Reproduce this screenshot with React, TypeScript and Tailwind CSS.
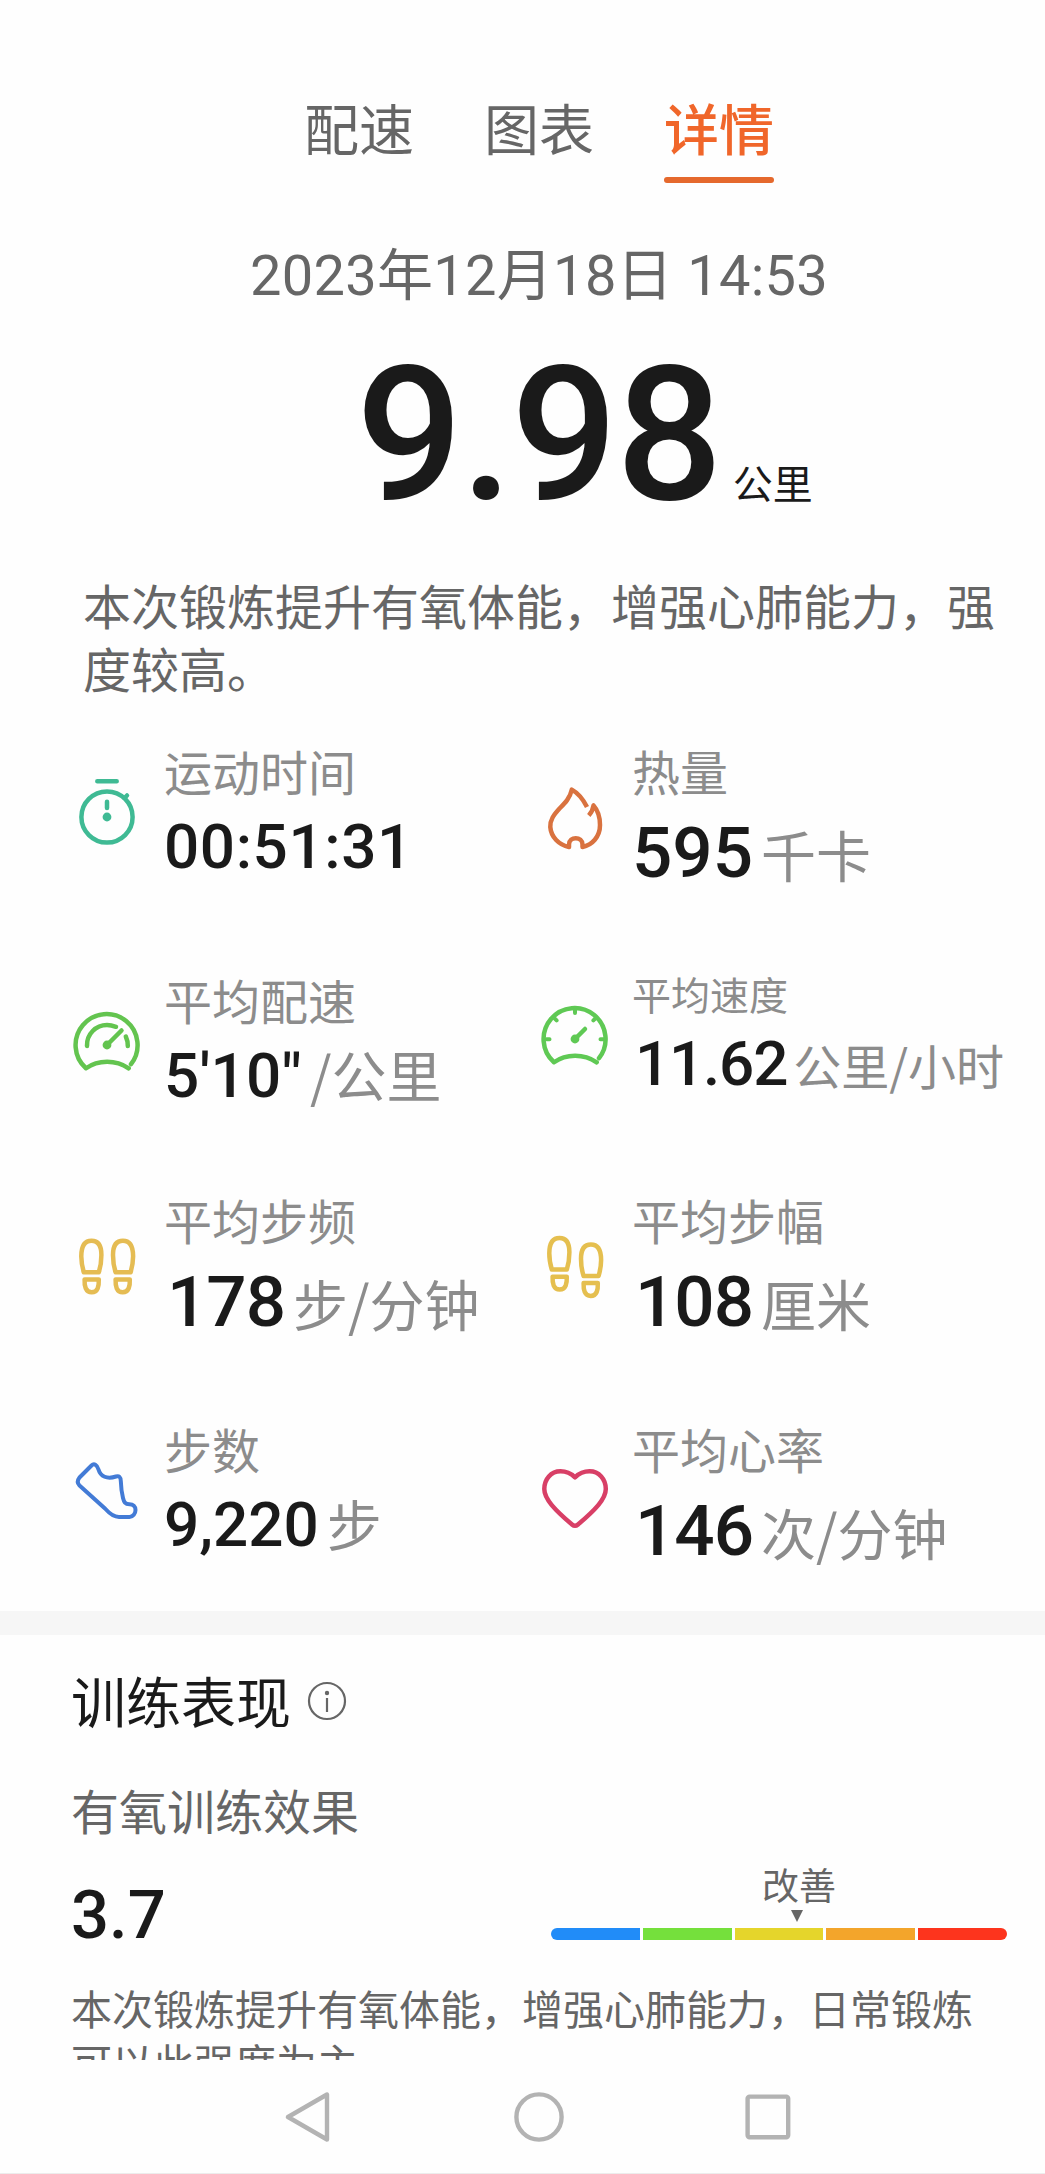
import type { ReactNode } from 'react'

type Size = 'md' | 'lg'

interface Stat {
  label: string
  value: string
  unit?: string
  size: Size
  compact?: boolean
  spacing?: string
  icon: ReactNode
}

const num = 'font-["Roboto","Noto_Sans_CJK_SC",sans-serif]'

function Icon({ color, width = 4.5, children }: { color: string; width?: number; children: ReactNode }) {
  return (
    <svg
      viewBox="0 0 72 72"
      className={`w-[72px] h-[72px] flex-shrink-0 ${color}`}
      fill="none"
      stroke="currentColor"
      strokeWidth={width}
      strokeLinecap="round"
      strokeLinejoin="round"
    >
      {children}
    </svg>
  )
}

function GaugeBody() {
  return (
    <>
      <path d="M60 56.2A31 31 0 1 0 15 60.3C27 51.5 45 51.5 57.7 60.3" />
      <circle cx="36" cy="37" r="4.4" fill="currentColor" stroke="none" />
    </>
  )
}

function Foot() {
  return (
    <>
      <path d="M12.8 38.3C11 32 10.2 28 10.3 22C10.4 12 14 6.8 20.5 6.8C27 6.8 30.4 12 30.4 21C30.4 28 29.5 33 27.8 38.3Z" />
      <path d="M13.6 45.4H27.8C28 52 27 58.2 20.7 58.2C14.5 58.2 13.3 52 13.6 45.4Z" />
    </>
  )
}

const stats: Stat[] = [
  {
    label: '运动时间',
    value: '00:51:31',
    size: 'md',
    spacing: 'tracking-[0.6px]',
    icon: (
      <Icon color="text-[#3fba94]">
        <circle cx="36" cy="38" r="25.6" />
        <path d="M26.3 2.3H45.7M53.5 19L56 16.5M36 22.8V29" />
        <circle cx="36" cy="38" r="4.4" fill="currentColor" stroke="none" />
      </Icon>
    ),
  },
  {
    label: '热量',
    value: '595',
    unit: '千卡',
    size: 'lg',
    icon: (
      <Icon color="text-[#d9723f]">
        <path
          strokeLinecap="butt"
          d="M48 22C44 14 39 8 32.8 4.6C31 13 26 18 21 23C14.5 30 11 35 11.3 42C12 52 20 60 30 62V59.5C30 51 43.5 51 43.5 59.5V62C53 60 61 52 61 40C61 32 58.5 25 54.5 20.5C54 24.5 52 28 49.8 30.5"
        />
      </Icon>
    ),
  },
  {
    label: '平均配速',
    value: `5'10"`,
    unit: '/公里',
    size: 'md',
    spacing: 'tracking-[0.4px]',
    icon: (
      <Icon color="text-[#63c44f]">
        <GaugeBody />
        <path d="M36 37L50.5 22.5" />
        <path d="M16 38C15.5 26 25 17 36 17C39.5 17 42 17.7 45 18.8M54.8 28.5C56.2 31.5 56.9 35 56.8 38" />
      </Icon>
    ),
  },
  {
    label: '平均速度',
    value: '11.62',
    unit: '公里/小时',
    size: 'md',
    compact: true,
    spacing: 'pl-[3px] tracking-[-1.2px]',
    icon: (
      <Icon color="text-[#5fc954]">
        <GaugeBody />
        <path d="M36 37L46 27" />
        <path strokeWidth="4" d="M36 8V11M7.5 37.2H10.5M61.5 37.2H64.5M15.8 16.6L17.6 18.4M56.2 16.6L54.4 18.4" />
      </Icon>
    ),
  },
  {
    label: '平均步频',
    value: '178',
    unit: '步/分钟',
    size: 'lg',
    spacing: 'pl-[3px] tracking-[-1px]',
    icon: (
      <Icon color="text-[#e5bc53]">
        <Foot />
        <g transform="translate(72.4 0) scale(-1 1)">
          <Foot />
        </g>
      </Icon>
    ),
  },
  {
    label: '平均步幅',
    value: '108',
    unit: '厘米',
    size: 'lg',
    spacing: 'pl-[3px] tracking-[-1px]',
    icon: (
      <Icon color="text-[#e5bf4f]">
        <g transform="translate(0 -2.7)">
          <Foot />
        </g>
        <g transform="translate(72.4 3.7) scale(-1 1)">
          <Foot />
        </g>
      </Icon>
    ),
  },
  {
    label: '步数',
    value: '9,220',
    unit: '步',
    size: 'md',
    icon: (
      <Icon color="text-[#437bd6]" width={4}>
        <path d="M20.5 8.5L8.5 20.5Q5 25 8.5 28.5L34 51.5C38 56 42 60 48 60H58.5C62 60 64.5 56.5 64.5 53C64.5 49.5 62 47.3 58.5 47.3C54 47.3 53 45 52 41C50.5 35 50 30 49.8 24C49.7 20 48 18.5 45 19.5C36 22.5 29.5 19.5 27.5 12.5C26 7.5 23 6 20.5 8.5Z" />
      </Icon>
    ),
  },
  {
    label: '平均心率',
    value: '146',
    unit: '次/分钟',
    size: 'lg',
    spacing: 'pl-[3px] tracking-[-1px]',
    icon: (
      <Icon color="text-[#d83f66]">
        <path d="M36 14.3C31 9.5 26 8.3 21.5 8.3C12 8.3 5.3 16 5.3 26C5.3 36 16 47 33 61.5Q36 64 39 61.5C56 47 66.8 36 66.8 26C66.8 16 60 8.3 50.5 8.3C46 8.3 41 9.5 36 14.3Z" />
      </Icon>
    ),
  },
]

const tabs = ['配速', '图表', '详情']

const zones = ['bg-[#218cf8] rounded-l-full', 'bg-[#75e03c]', 'bg-[#e5d52b]', 'bg-[#f3a52b]', 'bg-[#fd341d] rounded-r-full']

function StatCell({ stat }: { stat: Stat }) {
  const valueSize = stat.compact
    ? 'text-[62px] leading-[88px]'
    : stat.size === 'lg'
    ? 'text-[71px] leading-[102px]'
    : 'text-[62px] leading-[90px]'

  return (
    <div className="flex items-center gap-[21px] self-start whitespace-nowrap">
      {stat.icon}
      <div>
        <p className={`text-[#8c8c8c] ${stat.compact ? 'text-[39px] leading-[53px]' : 'text-[48px] leading-[64px]'}`}>
          {stat.label}
        </p>
        <div className={`flex items-baseline ${stat.compact ? 'gap-1.5' : 'gap-2'}`}>
          <span className={`${num} font-medium text-[#1a1a1a] ${valueSize} ${stat.spacing ?? ''}`}>{stat.value}</span>
          {stat.unit && (
            <span className={`text-[#8c8c8c] leading-none ${stat.compact ? 'text-[48px]' : 'text-[55px]'}`}>{stat.unit}</span>
          )}
        </div>
      </div>
    </div>
  )
}

export default function App() {
  return (
    <div className='w-[1045px] h-[2174px] flex flex-col overflow-hidden bg-[#fefefe] font-["Noto_Sans_CJK_SC",sans-serif]'>
      <main className="h-[2060px] flex-shrink-0 overflow-hidden">
        {/* Tabs */}
        <div className="flex justify-center gap-[70px] pl-[33px] pt-[93px]">
          {tabs.map(tab => {
            const active = tab === '详情'
            return (
              <button key={tab} className="flex flex-col items-center">
                <span className={`text-[55px] leading-[66px] ${active ? 'text-[#f0662a] font-medium' : 'text-[#666]'}`}>{tab}</span>
                <span className={`w-[110px] h-1.5 mt-[18px] rounded-full ${active ? 'bg-[#e5692d]' : ''}`} />
              </button>
            )
          })}
        </div>

        {/* Distance */}
        <p className={`${num} pl-[33px] mt-[61px] text-center text-[56px] leading-[64px] tracking-[0.3px] text-[#666]`}>
          2023年12月18日 14:53
        </p>
        <div className="flex items-baseline pl-[356px] mt-[33px] text-[#1a1a1a]">
          <span className={`${num} text-[188px] leading-[188px] font-medium tracking-[-2px]`}>9.98</span>
          <span className="ml-3 text-[40px] leading-none">公里</span>
        </div>

        <p className="ml-[83px] w-[930px] mt-11 text-[48px] leading-[63px] text-[#666]">
          本次锻炼提升有氧体能，增强心肺能力，强度较高。
        </p>

        {/* Stats */}
        <div className="grid grid-cols-[468px_1fr] grid-rows-[229px_220px_229px_195px] pl-[71px] mt-[39px]">
          {stats.map(s => <StatCell key={s.label} stat={s} />)}
        </div>

        <div className="h-6 bg-[#f6f6f6]" />

        {/* Training performance */}
        <section className="pl-[71px] pt-7">
          <div className="flex items-center gap-4">
            <h2 className="text-[55px] leading-[72px] text-[#1a1a1a]">训练表现</h2>
            <svg viewBox="0 0 40 40" className="w-10 h-10 mt-1 text-[#666]" fill="none" stroke="currentColor" strokeWidth="2.2">
              <circle cx="20" cy="20" r="18" />
              <path d="M20 17V31" />
              <circle cx="20" cy="12" r="2.2" fill="currentColor" stroke="none" />
            </svg>
          </div>
          <p className="mt-11 text-[48px] leading-[60px] text-[#666]">有氧训练效果</p>

          <div className="flex justify-between items-start mt-[23px] pr-[38px]">
            <span className={`${num} mt-[13px] text-[67px] leading-[80px] font-medium text-[#1a1a1a]`}>3.7</span>
            <div className="w-[456px] flex flex-col">
              <span className="ml-[211px] text-[37px] leading-[44px] text-[#666]">改善</span>
              <svg viewBox="0 0 12 12" className="w-3 h-3 ml-[240px] mt-1">
                <path d="M0 0H12L6 12Z" fill="#666" />
              </svg>
              <div className="flex gap-[3px] mt-1.5">
                {zones.map(z => <div key={z} className={`flex-1 h-3 ${z}`} />)}
              </div>
            </div>
          </div>

          <p className="w-[930px] mt-[25px] text-[41px] leading-[54px] text-[#666]">
            本次锻炼提升有氧体能，增强心肺能力，日常锻炼可以此强度为主。
          </p>
        </section>
      </main>

      {/* System navigation */}
      <nav className="flex-1 flex items-center justify-center gap-[179px] pl-[33px] border-b border-[#ececec] text-[#b3b3b3]">
        <svg viewBox="0 0 50 54" className="w-[50px] h-[54px]" fill="none" stroke="currentColor" strokeWidth="4.4" strokeLinejoin="round">
          <path d="M42 4.5V49.5L3 27Z" />
        </svg>
        <svg viewBox="0 0 50 50" className="w-[50px] h-[50px]" fill="none" stroke="currentColor" strokeWidth="4.4">
          <circle cx="25" cy="25" r="22.6" />
        </svg>
        <svg viewBox="0 0 50 50" className="w-[50px] h-[50px]" fill="none" stroke="currentColor" strokeWidth="4.4">
          <rect x="4.6" y="4.6" width="40.6" height="40.6" rx="2" />
        </svg>
      </nav>
    </div>
  )
}
